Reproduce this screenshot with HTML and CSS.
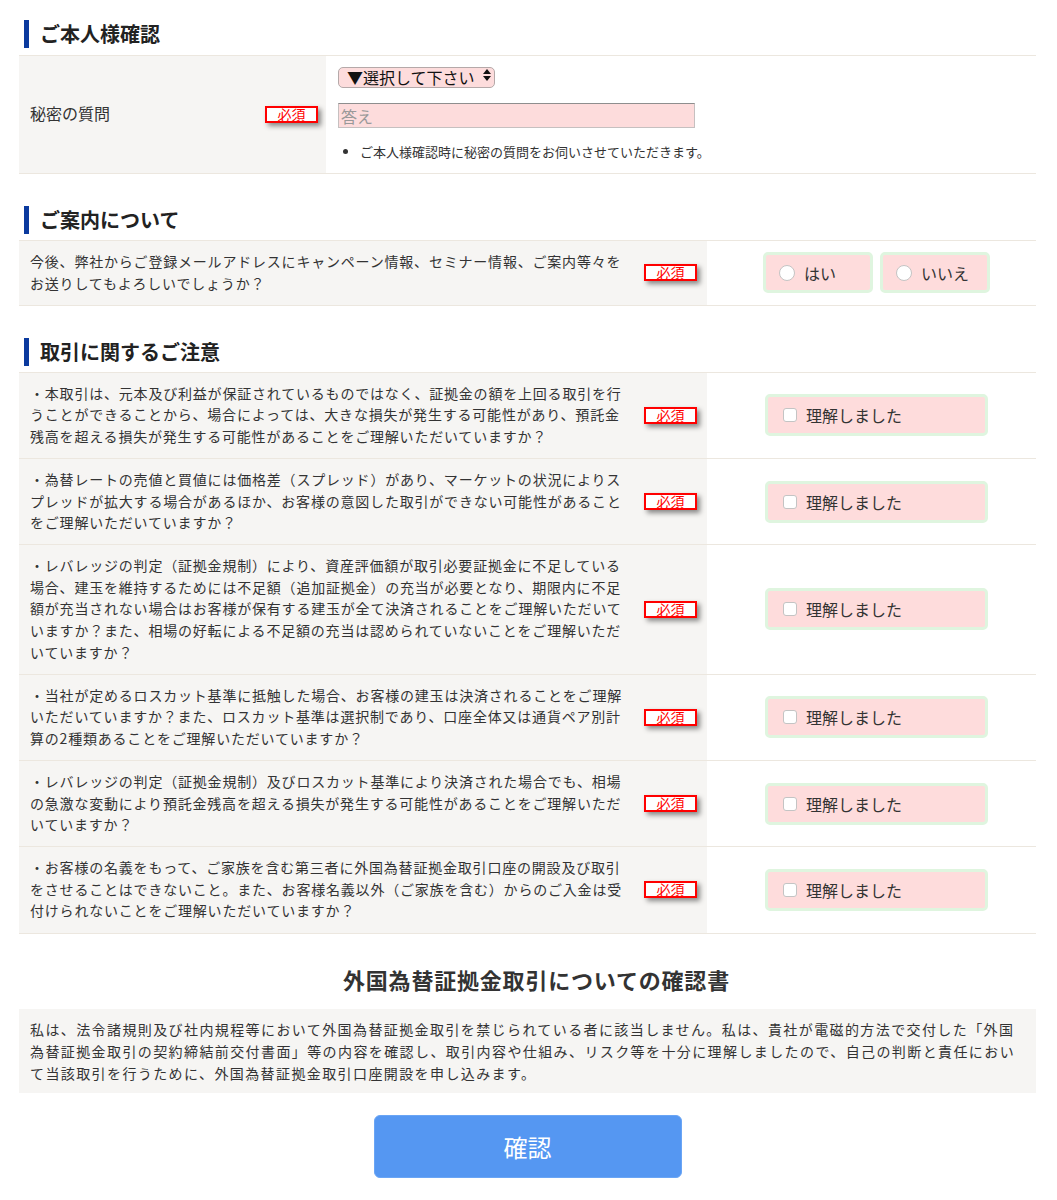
FILE: index.html
```html
<!DOCTYPE html>
<html lang="ja">
<head>
  <meta charset="UTF-8">
  <meta name="viewport" content="width=device-width, initial-scale=1.0">
  <title>ご本人様確認</title>
  <link rel="stylesheet" href="styles.css">
</head>
<body>
  <div class="page">
    <h2 class="section-title">ご本人様確認</h2>
    <div class="table">
      <div class="row">
        <div class="label label-narrow">
          <span class="label-text">秘密の質問</span>
          <span class="required">必須</span>
        </div>
        <div class="value value-form">
          <div class="select-wrap">
            <select class="select">
              <option>▼選択して下さい</option>
            </select>
            <svg class="select-arrows" width="8" height="12" viewBox="0 0 8 12">
              <path d="M4 0 L8 5 L0 5 Z M4 12 L8 7 L0 7 Z" fill="#111"/>
            </svg>
          </div>
          <input class="answer" type="text" placeholder="答え">
          <ul class="notes">
            <li>ご本人様確認時に秘密の質問をお伺いさせていただきます。</li>
          </ul>
        </div>
      </div>
    </div>

    <h2 class="section-title">ご案内について</h2>
    <div class="table">
      <div class="row">
        <div class="label">
          <span class="label-text">今後、弊社からご登録メールアドレスにキャンペーン情報、セミナー情報、ご案内等々をお送りしてもよろしいでしょうか？</span>
          <span class="required">必須</span>
        </div>
        <div class="value">
          <label class="choice choice-radio"><input type="radio" name="mail"><span>はい</span></label>
          <label class="choice choice-radio"><input type="radio" name="mail"><span>いいえ</span></label>
        </div>
      </div>
    </div>

    <h2 class="section-title">取引に関するご注意</h2>
    <div class="table">
      <div class="row">
        <div class="label">
          <span class="label-text">・本取引は、元本及び利益が保証されているものではなく、証拠金の額を上回る取引を行うことができることから、場合によっては、大きな損失が発生する可能性があり、預託金残高を超える損失が発生する可能性があることをご理解いただいていますか？</span>
          <span class="required">必須</span>
        </div>
        <div class="value">
          <label class="choice choice-check"><input type="checkbox"><span>理解しました</span></label>
        </div>
      </div>
      <div class="row">
        <div class="label">
          <span class="label-text">・為替レートの売値と買値には価格差（スプレッド）があり、マーケットの状況によりスプレッドが拡大する場合があるほか、お客様の意図した取引ができない可能性があることをご理解いただいていますか？</span>
          <span class="required">必須</span>
        </div>
        <div class="value">
          <label class="choice choice-check"><input type="checkbox"><span>理解しました</span></label>
        </div>
      </div>
      <div class="row">
        <div class="label">
          <span class="label-text">・レバレッジの判定（証拠金規制）により、資産評価額が取引必要証拠金に不足している場合、建玉を維持するためには不足額（追加証拠金）の充当が必要となり、期限内に不足額が充当されない場合はお客様が保有する建玉が全て決済されることをご理解いただいていますか？また、相場の好転による不足額の充当は認められていないことをご理解いただいていますか？</span>
          <span class="required">必須</span>
        </div>
        <div class="value">
          <label class="choice choice-check"><input type="checkbox"><span>理解しました</span></label>
        </div>
      </div>
      <div class="row">
        <div class="label">
          <span class="label-text">・当社が定めるロスカット基準に抵触した場合、お客様の建玉は決済されることをご理解いただいていますか？また、ロスカット基準は選択制であり、口座全体又は通貨ペア別計算の2種類あることをご理解いただいていますか？</span>
          <span class="required">必須</span>
        </div>
        <div class="value">
          <label class="choice choice-check"><input type="checkbox"><span>理解しました</span></label>
        </div>
      </div>
      <div class="row">
        <div class="label">
          <span class="label-text">・レバレッジの判定（証拠金規制）及びロスカット基準により決済された場合でも、相場の急激な変動により預託金残高を超える損失が発生する可能性があることをご理解いただいていますか？</span>
          <span class="required">必須</span>
        </div>
        <div class="value">
          <label class="choice choice-check"><input type="checkbox"><span>理解しました</span></label>
        </div>
      </div>
      <div class="row">
        <div class="label">
          <span class="label-text">・お客様の名義をもって、ご家族を含む第三者に外国為替証拠金取引口座の開設及び取引をさせることはできないこと。また、お客様名義以外（ご家族を含む）からのご入金は受付けられないことをご理解いただいていますか？</span>
          <span class="required">必須</span>
        </div>
        <div class="value">
          <label class="choice choice-check"><input type="checkbox"><span>理解しました</span></label>
        </div>
      </div>
    </div>

    <h3 class="confirm-title">外国為替証拠金取引についての確認書</h3>
    <p class="confirm-text">私は、法令諸規則及び社内規程等において外国為替証拠金取引を禁じられている者に該当しません。私は、貴社が電磁的方法で交付した「外国為替証拠金取引の契約締結前交付書面」等の内容を確認し、取引内容や仕組み、リスク等を十分に理解しましたので、自己の判断と責任において当該取引を行うために、外国為替証拠金取引口座開設を申し込みます。</p>

    <div class="actions">
      <button class="submit" type="button">確認</button>
    </div>
  </div>
</body>
</html>
```

FILE: styles.css
```css
body {
  margin: 0;
  font-family: "Noto Sans CJK JP", "Noto Sans", sans-serif;
  color: #333333;
  background-color: #ffffff;
}

.page {
  width: 1017px;
  margin-left: 19px;
  padding: 20px 0 23px;
}

.section-title {
  margin: 32px 0 6px 5px;
  padding-left: 11px;
  border-left: 5px solid #0b3a9e;
  font-size: 20px;
  font-weight: bold;
  line-height: 28px;
  color: #222222;
}

.section-title:first-child {
  margin-top: 0;
  margin-bottom: 7px;
}

.table {
  border-top: 1px solid #ece7df;
}

.row {
  display: flex;
  border-bottom: 1px solid #ece7df;
}

.label {
  width: 688px;
  box-sizing: border-box;
  padding: 10px 10px 10.5px 11px;
  background-color: #f6f5f3;
  display: flex;
  align-items: center;
  font-size: 14px;
  letter-spacing: 0.8px;
  line-height: 21.6px;
}

.label-text {
  width: 600px;
}

.label-narrow {
  width: 307px;
  padding-right: 8px;
  font-size: 16px;
  letter-spacing: 0;
}

.label-narrow .label-text {
  width: auto;
}

.required {
  margin-left: auto;
  width: 53px;
  height: 17px;
  box-sizing: border-box;
  border: 2px solid #ff0000;
  background-color: #ffffff;
  color: #ff0000;
  font-size: 14px;
  line-height: 13px;
  text-align: center;
  letter-spacing: 0;
  box-shadow: 3px 3px 5px rgba(0, 0, 0, 0.45);
  flex-shrink: 0;
}

.value {
  flex: 1;
  display: flex;
  align-items: center;
  justify-content: center;
  gap: 7px;
  padding-left: 10px;
}

.value-form {
  display: block;
  padding: 9px 0 11px 12px;
}

.select-wrap {
  position: relative;
  display: inline-block;
}

.select {
  appearance: none;
  -webkit-appearance: none;
  width: 157px;
  height: 21px;
  padding: 0 14px 0 8px;
  border: 1px solid #b5a9a9;
  border-radius: 5px;
  background-color: #fddcdc;
  font-family: inherit;
  font-size: 16px;
  line-height: 19px;
  color: #111111;
}

.select-arrows {
  position: absolute;
  right: 4px;
  top: 4px;
}

.answer {
  display: block;
  margin-top: 14px;
  width: 357px;
  height: 25px;
  box-sizing: border-box;
  padding: 0 2px;
  border: 1px solid #c6c0c0;
  border-top-color: #8e8e8e;
  background-color: #fddcdc;
  font-family: inherit;
  font-size: 16px;
}

.answer::placeholder {
  color: #999999;
}

.notes {
  margin: 14px 0 0;
  padding-left: 22px;
  font-size: 13px;
  line-height: 20px;
}

.choice {
  display: flex;
  align-items: center;
  gap: 9px;
  height: 41px;
  box-sizing: border-box;
  border: 3px solid #dff5df;
  border-radius: 5px;
  background-color: #fedcdc;
  font-size: 16px;
  cursor: pointer;
}

.choice-radio {
  width: 110px;
  padding-left: 13px;
}

.choice-check {
  width: 223px;
  height: 42px;
  padding-left: 15px;
}

.choice input {
  margin: 0;
  appearance: none;
  -webkit-appearance: none;
  background-color: #ffffff;
  border: 1px solid #c4c4c4;
}

.choice-radio input {
  width: 16px;
  height: 16px;
  border-radius: 50%;
}

.choice-check input {
  width: 14px;
  height: 14px;
  border-radius: 3px;
}

.confirm-title {
  margin: 30px 0 15px;
  padding-left: 18px;
  text-align: center;
  font-size: 22px;
  letter-spacing: 0.8px;
  line-height: 30px;
  font-weight: bold;
  color: #333333;
}

.confirm-text {
  margin: 0;
  padding: 9px 11px;
  background-color: #f6f5f3;
  font-size: 14px;
  letter-spacing: 1.4px;
  line-height: 22px;
}

.actions {
  display: flex;
  justify-content: center;
  margin-top: 22px;
}

.submit {
  width: 308px;
  height: 63px;
  border: 1px solid #6aa5f5;
  border-radius: 6px;
  background-color: #5597f2;
  color: #ffffff;
  font-family: inherit;
  font-size: 24px;
  cursor: pointer;
}
```
